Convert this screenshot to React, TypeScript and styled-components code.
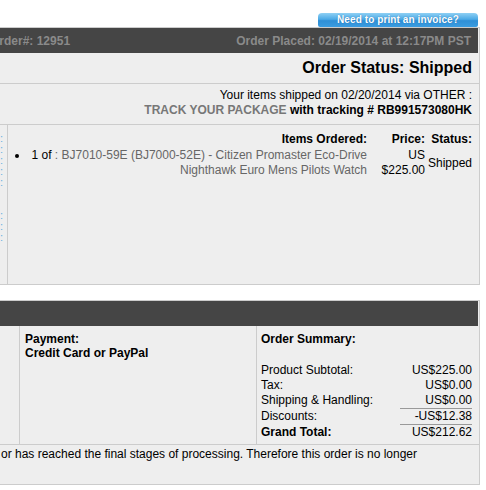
import React from "react";
import styled, { createGlobalStyle } from "styled-components";

const GlobalStyle = createGlobalStyle`
  *, *::before, *::after {
    box-sizing: border-box;
  }
  html, body {
    margin: 0;
    padding: 0;
    background: #fff;
    overflow: hidden;
  }
  body {
    font-family: "Liberation Sans", Arial, sans-serif;
    font-size: 12px;
    color: #000;
  }
`;

const StyledPage = styled.div`
  width: 494px;
  margin-left: -14px;
`;

const StyledTopBar = styled.div`
  height: 27px;
  display: flex;
  align-items: flex-end;
  justify-content: flex-end;
  padding-right: 2px;
`;

const StyledInvoiceButton = styled.button`
  width: 160px;
  height: 14px;
  padding: 0;
  border: none;
  border-radius: 4px 4px 2px 2px;
  background: linear-gradient(#8fd0f4 0%, #4caae6 45%, #2f8fd6 55%, #3a9ce0 100%);
  color: #fff;
  font-family: "Liberation Sans", Arial, sans-serif;
  font-size: 10px;
  font-weight: bold;
  letter-spacing: 0.1px;
  line-height: 14px;
  text-shadow: 0 0 1px #1c6aa8;
  cursor: pointer;
`;

const StyledPanel = styled.div<{ gap?: number }>`
  border: 1px solid #ccc;
  background: #eee;
  margin-top: ${({ gap }) => gap ?? 0}px;
`;

const StyledDarkBar = styled.div`
  height: 25px;
  background: #454545;
  display: flex;
  align-items: center;
  justify-content: space-between;
  padding: 0 7px 0 3px;
  margin-right: 1px;
  color: #8a8a8a;
  font-weight: bold;
`;

const StyledStatusRow = styled.div`
  height: 31px;
  line-height: 30px;
  text-align: right;
  padding-right: 7px;
  font-size: 16px;
  font-weight: bold;
  border-bottom: 1px solid #ccc;
`;

const StyledTrackingRow = styled.div`
  padding: 4px 7px 6px 0;
  line-height: 15px;
  text-align: right;
  border-bottom: 1px solid #ccc;
`;

const StyledMuted = styled.span`
  color: #777;
  font-weight: bold;
`;

const StyledBold = styled.span`
  font-weight: bold;
`;

const StyledItemsRow = styled.div`
  display: flex;
  height: 159px;
`;

const StyledSideLinks = styled.div`
  width: 21px;
  border-right: 1px solid #ccc;
  overflow: hidden;
  padding: 8px 4px 0 0;
`;

const StyledSideGroup = styled.ul`
  list-style: none;
  margin: 0 0 22px;
  padding: 0;
  width: 120px;
  margin-left: -104px;
  text-align: right;
`;

const StyledSideLink = styled.li`
  color: #6ab0e0;
  font-size: 11px;
  line-height: 11px;
  white-space: nowrap;
`;

const StyledItemsGrid = styled.div`
  flex: 1;
  display: grid;
  grid-template-columns: 1fr 55px 47px;
  grid-template-rows: 16px auto;
  align-content: start;
  padding: 7px 7px 0 0;
  line-height: 15px;
`;

const StyledHeadCell = styled.div<{ pad?: number }>`
  font-weight: bold;
  text-align: right;
  padding-right: ${({ pad }) => pad ?? 0}px;
  line-height: 14px;
`;

const StyledItemList = styled.ul`
  margin: 0;
  padding: 0 3px 0 0;
  list-style: disc inside;
  text-align: right;
`;

const StyledItem = styled.li`
  color: #666;
  &::marker {
    color: #000;
  }
`;

const StyledQty = styled.span`
  color: #000;
`;

const StyledPrice = styled.div`
  text-align: right;
`;

const StyledItemStatus = styled.div`
  text-align: right;
  align-self: center;
`;

const StyledDetailsRow = styled.div`
  display: flex;
  border-bottom: 1px solid #ccc;
`;

const StyledDetailCol = styled.div<{ w?: number; last?: boolean }>`
  ${({ w }) => (w ? `width: ${w}px;` : "flex: 1;")}
  border-right: ${({ last }) => (last ? "none" : "1px solid #ccc")};
  padding: 6px 7px 4px 4px;
  line-height: 14px;
`;

const StyledPaymentCol = styled(StyledDetailCol)`
  padding-left: 5px;
  font-weight: bold;
`;

const StyledSummaryTitle = styled.div`
  font-weight: bold;
  margin-bottom: 17px;
`;

const StyledSummaryGrid = styled.div`
  display: grid;
  grid-template-columns: 1fr 72px;
  line-height: 15px;
`;

const StyledSummaryLabel = styled.div<{ strong?: boolean; ruled?: boolean }>`
  font-weight: ${({ strong }) => (strong ? "bold" : "normal")};
  padding-top: ${({ ruled }) => (ruled ? 1 : 0)}px;
`;

const StyledSummaryValue = styled.div<{ ruled?: boolean }>`
  text-align: right;
  border-top: ${({ ruled }) => (ruled ? "1px solid #999" : "none")};
`;

const StyledFooter = styled.div`
  padding: 2px 7px 22px 14px;
  line-height: 15px;
  white-space: nowrap;
  overflow: hidden;
`;

const sideGroups = [
  ["Track :", "Contact :", "View :", "Feedback :", "Print :"],
  ["Return :", "Report :", "Help :"],
];

const summary = [
  { label: "Product Subtotal:", value: "US$225.00" },
  { label: "Tax:", value: "US$0.00" },
  { label: "Shipping & Handling:", value: "US$0.00" },
  { label: "Discounts:", value: "-US$12.38", ruled: true },
  { label: "Grand Total:", value: "US$212.62", ruled: true, strong: true },
];

function App() {
  return (
    <>
      <GlobalStyle />
      <StyledPage>
        <StyledTopBar>
          <StyledInvoiceButton>Need to print an invoice?</StyledInvoiceButton>
        </StyledTopBar>

        <StyledPanel>
          <StyledDarkBar>
            <span>Order#: 12951</span>
            <span>Order Placed: 02/19/2014 at 12:17PM PST</span>
          </StyledDarkBar>
          <StyledStatusRow>Order Status: Shipped</StyledStatusRow>
          <StyledTrackingRow>
            Your items shipped on 02/20/2014 via OTHER :
            <br />
            <StyledMuted>TRACK YOUR PACKAGE</StyledMuted>{" "}
            <StyledBold>with tracking # RB991573080HK</StyledBold>
          </StyledTrackingRow>
          <StyledItemsRow>
            <StyledSideLinks>
              {sideGroups.map((group, i) => (
                <StyledSideGroup key={i}>
                  {group.map((link) => (
                    <StyledSideLink key={link}>{link}</StyledSideLink>
                  ))}
                </StyledSideGroup>
              ))}
            </StyledSideLinks>
            <StyledItemsGrid>
              <StyledHeadCell pad={3}>Items Ordered:</StyledHeadCell>
              <StyledHeadCell>Price:</StyledHeadCell>
              <StyledHeadCell>Status:</StyledHeadCell>
              <StyledItemList>
                <StyledItem>
                  <StyledQty>1 of</StyledQty> : BJ7010-59E (BJ7000-52E) - Citizen Promaster Eco-Drive
                  <br />
                  Nighthawk Euro Mens Pilots Watch
                </StyledItem>
              </StyledItemList>
              <StyledPrice>
                US
                <br />
                $225.00
              </StyledPrice>
              <StyledItemStatus>Shipped</StyledItemStatus>
            </StyledItemsGrid>
          </StyledItemsRow>
        </StyledPanel>

        <StyledPanel gap={15}>
          <StyledDarkBar />
          <StyledDetailsRow>
            <StyledDetailCol w={33} />
            <StyledPaymentCol w={237}>
              Payment:
              <br />
              Credit Card or PayPal
            </StyledPaymentCol>
            <StyledDetailCol last>
              <StyledSummaryTitle>Order Summary:</StyledSummaryTitle>
              <StyledSummaryGrid>
                {summary.map((row) => (
                  <React.Fragment key={row.label}>
                    <StyledSummaryLabel strong={row.strong} ruled={row.ruled}>
                      {row.label}
                    </StyledSummaryLabel>
                    <StyledSummaryValue ruled={row.ruled}>{row.value}</StyledSummaryValue>
                  </React.Fragment>
                ))}
              </StyledSummaryGrid>
            </StyledDetailCol>
          </StyledDetailsRow>
          <StyledFooter>
            or has reached the final stages of processing. Therefore this order is no longer
          </StyledFooter>
        </StyledPanel>
      </StyledPage>
    </>
  );
}

export default App;
